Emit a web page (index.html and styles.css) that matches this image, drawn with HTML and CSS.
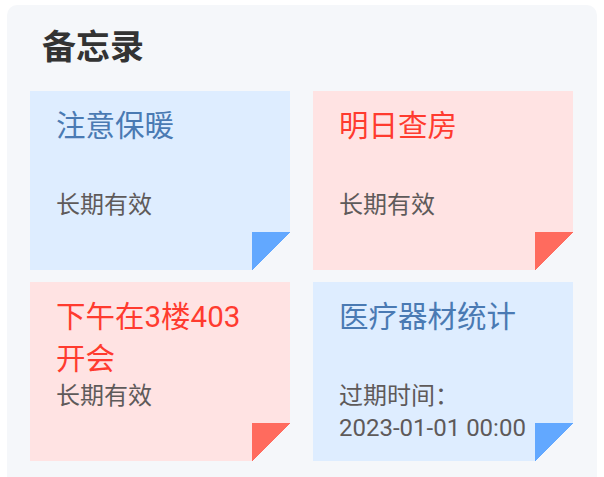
FILE: index.html
```html
<!DOCTYPE html>
<html lang="zh-CN">
<head>
<meta charset="utf-8">
<title>备忘录</title>
<link rel="stylesheet" href="styles.css">
</head>
<body>
<section class="memo">
  <h1 class="memo-title">备忘录</h1>
  <div class="memo-grid">
    <div class="note note-blue">
      <div class="note-title">注意保暖</div>
      <div class="note-body">长期有效</div>
    </div>
    <div class="note note-red">
      <div class="note-title">明日查房</div>
      <div class="note-body">长期有效</div>
    </div>
    <div class="note note-red">
      <div class="note-title">下午在3楼403开会</div>
      <div class="note-body">长期有效</div>
    </div>
    <div class="note note-blue">
      <div class="note-title">医疗器材统计</div>
      <div class="note-body">过期时间：<br>2023-01-01 00:00</div>
    </div>
  </div>
</section>
</body>
</html>
```
FILE: styles.css
```css
html, body {
  margin: 0;
  padding: 0;
  background: #ffffff;
}
body {
  padding: 5px 7px 0;
  font-family: Roboto, "Noto Sans CJK SC", sans-serif;
  overflow: hidden;
}
.memo {
  width: 590px;
  box-sizing: border-box;
  background: #f5f7fa;
  border-radius: 10px 10px 0 0;
  padding: 22px 24px 16px 23px;
}
.memo-title {
  margin: 0 0 23px 12px;
  font-size: 34px;
  line-height: 41px;
  font-weight: 700;
  color: #333333;
}
.memo-grid {
  display: grid;
  grid-template-columns: 260px 260px;
  grid-auto-rows: 179px;
  column-gap: 23px;
  row-gap: 12px;
}
.note {
  position: relative;
  box-sizing: border-box;
  padding: 14px 26px 0 26px;
}
.note::after {
  content: "";
  position: absolute;
  right: 0;
  bottom: 0;
  width: 38px;
  height: 38px;
}
.note-blue {
  background: linear-gradient(-45deg, transparent 26.9px, #deedff 26.9px);
}
.note-blue::after {
  background: linear-gradient(to bottom right, #62a8ff 50%, transparent 50%);
}
.note-red {
  background: linear-gradient(-45deg, transparent 26.9px, #ffe3e3 26.9px);
}
.note-red::after {
  background: linear-gradient(to bottom right, #ff6b5e 50%, transparent 50%);
}
.note-title {
  height: 84px;
  font-size: 29.5px;
  line-height: 42px;
}
.note-blue .note-title {
  color: #4a7ab3;
}
.note-red .note-title {
  color: #ff3b2f;
}
.note-body {
  font-size: 24px;
  line-height: 32px;
  color: #5e5a5a;
}
```
